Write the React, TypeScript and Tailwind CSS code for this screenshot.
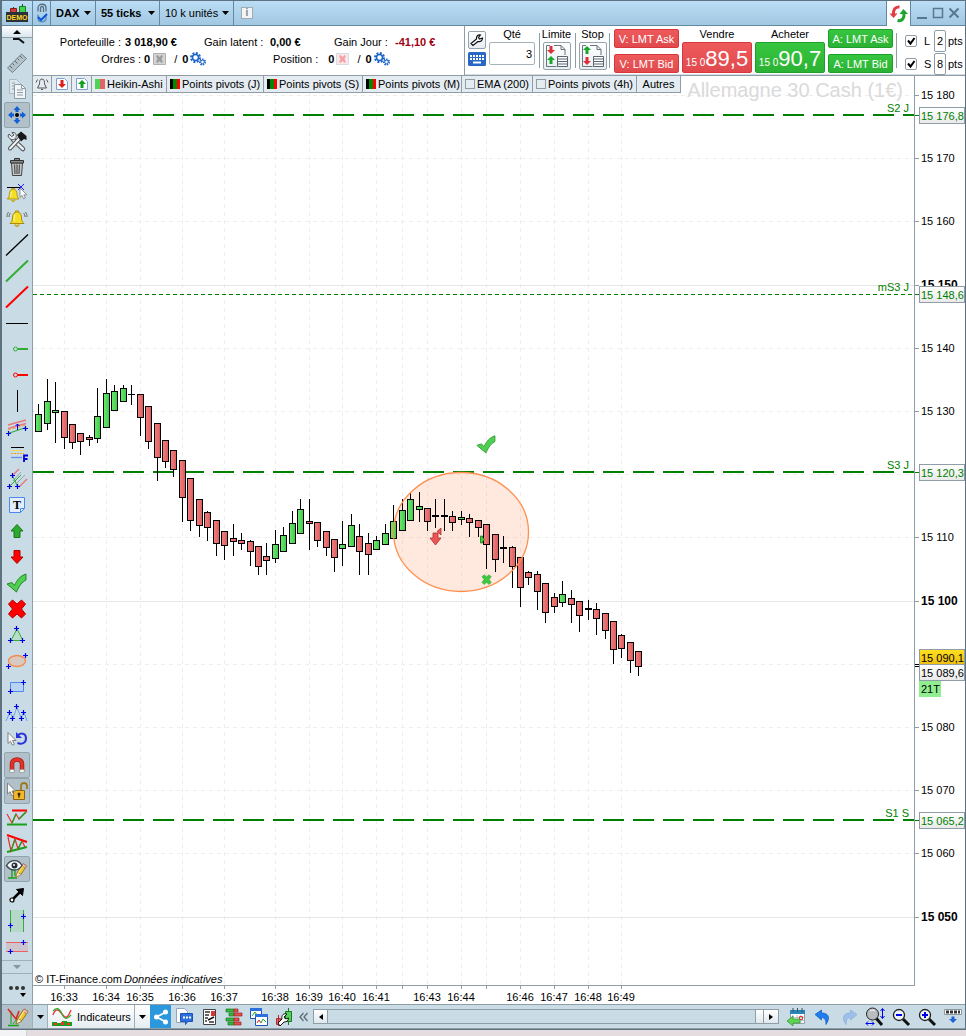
import type { ReactNode } from "react";
import clsx from "clsx";

type Tone = "up" | "down" | "flat";

// left edge, high, body top, body bottom, low, tone
type Candle = [number, number, number, number, number, Tone];

const candles: Candle[] = [
  [35, 404, 414, 432, 432, "up"],
  [44, 379, 401, 424, 430, "up"],
  [52, 382, 410, 413, 443, "up"],
  [61, 411, 411, 438, 449, "down"],
  [69, 424, 424, 443, 449, "down"],
  [77, 433, 433, 442, 455, "down"],
  [86, 435, 437, 440, 446, "down"],
  [94, 388, 416, 439, 443, "up"],
  [103, 379, 393, 428, 428, "up"],
  [111, 385, 391, 411, 411, "up"],
  [120, 385, 388, 402, 402, "up"],
  [128, 385, 394, 395, 405, "flat"],
  [137, 394, 394, 418, 436, "down"],
  [145, 406, 406, 442, 449, "down"],
  [154, 423, 423, 458, 481, "down"],
  [162, 440, 440, 462, 468, "down"],
  [170, 450, 450, 470, 477, "down"],
  [179, 460, 460, 498, 522, "down"],
  [187, 478, 478, 521, 531, "down"],
  [196, 499, 499, 526, 537, "down"],
  [204, 511, 512, 528, 541, "down"],
  [213, 520, 520, 544, 556, "down"],
  [221, 531, 531, 546, 560, "down"],
  [230, 524, 538, 542, 556, "down"],
  [238, 533, 540, 544, 550, "down"],
  [247, 540, 541, 552, 566, "down"],
  [255, 546, 546, 567, 575, "down"],
  [263, 543, 556, 561, 575, "down"],
  [272, 530, 544, 559, 563, "up"],
  [280, 527, 535, 552, 552, "up"],
  [289, 511, 523, 544, 544, "up"],
  [297, 499, 509, 534, 534, "up"],
  [306, 499, 521, 524, 550, "down"],
  [314, 522, 522, 541, 547, "down"],
  [323, 531, 531, 548, 556, "down"],
  [331, 539, 539, 558, 572, "down"],
  [339, 521, 544, 549, 566, "up"],
  [348, 514, 525, 547, 547, "up"],
  [356, 524, 536, 552, 575, "down"],
  [365, 533, 543, 555, 575, "down"],
  [373, 536, 540, 550, 550, "up"],
  [382, 524, 533, 545, 545, "up"],
  [390, 505, 521, 539, 539, "up"],
  [399, 499, 510, 531, 531, "up"],
  [407, 493, 499, 521, 521, "up"],
  [416, 492, 506, 510, 522, "up"],
  [424, 508, 508, 522, 531, "down"],
  [432, 499, 515, 517, 528, "flat"],
  [441, 499, 515, 517, 531, "flat"],
  [449, 511, 516, 523, 531, "down"],
  [458, 511, 517, 520, 525, "up"],
  [466, 514, 518, 523, 537, "down"],
  [475, 520, 520, 528, 537, "down"],
  [483, 524, 524, 545, 569, "down"],
  [492, 534, 534, 560, 572, "down"],
  [500, 536, 547, 549, 563, "flat"],
  [509, 546, 547, 567, 588, "down"],
  [517, 557, 557, 588, 607, "down"],
  [525, 571, 572, 578, 585, "down"],
  [534, 571, 574, 592, 610, "down"],
  [542, 583, 583, 613, 623, "down"],
  [551, 593, 597, 607, 613, "down"],
  [559, 581, 594, 603, 607, "up"],
  [568, 590, 598, 605, 623, "down"],
  [576, 601, 601, 616, 632, "down"],
  [585, 600, 608, 610, 620, "flat"],
  [593, 603, 609, 619, 635, "down"],
  [602, 613, 613, 631, 639, "down"],
  [610, 621, 621, 650, 664, "down"],
  [618, 634, 635, 649, 658, "down"],
  [627, 642, 642, 661, 673, "down"],
  [635, 651, 651, 667, 676, "down"],
];

const times = [
  { x: 31, label: "16:33" },
  { x: 73, label: "16:34" },
  { x: 107, label: "16:35" },
  { x: 149, label: "16:36" },
  { x: 191, label: "16:37" },
  { x: 242, label: "16:38" },
  { x: 276, label: "16:39" },
  { x: 309, label: "16:40" },
  { x: 343, label: "16:41" },
  { x: 369 },
  { x: 394, label: "16:43" },
  { x: 428, label: "16:44" },
  { x: 453 },
  { x: 487, label: "16:46" },
  { x: 521, label: "16:47" },
  { x: 555, label: "16:48" },
  { x: 588, label: "16:49" },
];

const prices = [
  { value: 15180, text: "15 180" },
  { value: 15170, text: "15 170" },
  { value: 15160, text: "15 160" },
  { value: 15150, text: "15 150", major: true },
  { value: 15140, text: "15 140" },
  { value: 15130, text: "15 130" },
  { value: 15120 },
  { value: 15110, text: "15 110" },
  { value: 15100, text: "15 100", major: true },
  { value: 15090 },
  { value: 15080, text: "15 080" },
  { value: 15070, text: "15 070" },
  { value: 15060, text: "15 060" },
  { value: 15050, text: "15 050", major: true },
];

const pivots = [
  { y: 39, name: "S2 J", price: "15 176,8", heavy: true },
  { y: 218, name: "mS3 J", price: "15 148,6", heavy: false },
  { y: 396, name: "S3 J", price: "15 120,3", heavy: true },
  { y: 744, name: "S1 S", price: "15 065,2", heavy: true },
];

const priceY = (value: number) => Math.round((15180 - value) * 6.32 + 19);

function Icon({ children, size = 24 }: { children: ReactNode; size?: number }) {
  return (
    <svg width={size} height={size} viewBox={`0 0 ${size} ${size}`} fill="none" aria-hidden="true" className="shrink-0">
      {children}
    </svg>
  );
}

function Caret() {
  return (
    <svg width="7" height="4" viewBox="0 0 7 4" aria-hidden="true">
      <path d="M0 0h7L3.500 4z" fill="#000" />
    </svg>
  );
}

// small blue cross marking an anchor point
function Anchor({ x, y }: { x: number; y: number }) {
  return <path d={`M${x - 2.5} ${y}h5M${x} ${y - 2.5}v5`} stroke="#0000e6" strokeWidth="1.2" />;
}

function Bell() {
  return (
    <g>
      <path d="M12 5c-3.500 0-4.500 3-4.500 6 0 3-1 4-2.500 5.500h14c-1.500-1.500-2.500-2.500-2.500-5.500 0-3-1-6-4.500-6z" fill="#f4de22" stroke="#a98a10" />
      <path d="M10.500 5.500V4h3v1.500M10 17.500c0 2.500 4 2.500 4 0" stroke="#a98a10" fill="#e8c810" />
      <path d="M10 8c-.7 1.500-.8 4-1 6" stroke="#fffbc0" />
    </g>
  );
}

function Cursor() {
  return <path d="M0 0v11l2.500-2.300 1.800 4 2-1-1.800-3.700H8z" fill="#fff" stroke="#777" strokeWidth=".9" />;
}

function Pencil() {
  return (
    <g>
      <path d="M12 18l2-6 6-9 4 2.500-6 9z" fill="#f5c531" stroke="#8d7020" />
      <path d="M20 3l4 2.500-1.500 2.300-4-2.500z" fill="#f6b8a8" stroke="#a07050" strokeWidth=".7" />
      <path d="M12 18l1.800-5.500L18 15z" fill="#fff2d0" stroke="#8d7020" strokeWidth=".7" />
      <path d="M15 13l5-8" stroke="#fff3a0" />
    </g>
  );
}

const checkPath = "M2 13l5-1.500 2.500 3C12 9 15 5 21 3v6c-4 2-7 6-9.500 12z";
const crossPath = "M3.500 7l4-4 4.500 4L16.500 3l4 4-4 5 4 5-4 4-4.500-4-4.500 4-4-4 4-5z";

type Tool = { name: string; active?: boolean; icon: ReactNode };

const tools: Tool[] = [
  {
    name: "Règle",
    icon: (
      <g>
        <path d="M2.500 17L16.500 3l5 4.500L7.500 21.500z" fill="#b4c2ca" stroke="#71808a" />
        <path d="M5 15l2.500 2.500M7.500 12.500l1.800 1.800M10 10l2.500 2.500M12.500 7.500l1.800 1.800M15 5l2.500 2.500" stroke="#566570" />
      </g>
    ),
  },
  {
    name: "Copier",
    icon: (
      <g>
        <path d="M4.500 2.500h7l4 4v10h-11z" fill="#dce7ec" stroke="#aabac3" />
        <path d="M9.500 7.500h7l4 4v10h-11z" fill="#f3f6f8" stroke="#8d9ba5" />
        <path d="M16.500 7.500v4h4M12 13h6M12 15.500h6M12 18h6M7 6h3M7 9h2M7 12h2" stroke="#8d9ba5" />
      </g>
    ),
  },
  {
    name: "Déplacer",
    active: true,
    icon: (
      <g>
        <path d="M12 3l3.500 4h-2v2h-3V7h-2zM12 21l-3.500-4h2v-2h3v2h2zM3 12l4-3.500v2h2v3H7v2zM21 12l-4 3.500v-2h-2v-3h2v-2z" fill="#1261d6" />
        <circle cx="12" cy="12" r="2" fill="#000" />
      </g>
    ),
  },
  {
    name: "Réglages",
    icon: (
      <g>
        <path d="M18 20L8 10.500" stroke="#4d5459" strokeWidth="4.500" strokeLinecap="round" />
        <path d="M18 20L8 10.500" stroke="#e8ecee" strokeWidth="2.500" strokeLinecap="round" />
        <path d="M3 7l1-2 2.500 2.500L9 6 7 3.500C10 3 12 5 11 8.500 9 12 5 11.500 3 7z" fill="#e8ecee" stroke="#4d5459" />
        <path d="M5 19.500l9-9.500" stroke="#4d5459" strokeWidth="4" strokeLinecap="round" />
        <path d="M5 19.500l9-9.500" stroke="#f5f5f5" strokeWidth="2" strokeLinecap="round" />
        <path d="M12 6l4-3.500 5.500 4.500v4L19 10l-3 2.500z" fill="#181818" />
      </g>
    ),
  },
  {
    name: "Supprimer",
    icon: (
      <g>
        <path d="M6.500 8h11l-1 12.500h-9z" fill="#c9c9c9" stroke="#444" />
        <path d="M9.500 9.500l.5 9.500M12 9.500V19M14.500 9.500L14 19" stroke="#555" strokeWidth="1.300" />
        <path d="M5.500 5.500h13V8h-13zM9.500 5V3.500h5V5" fill="#8b8b8b" stroke="#333" />
      </g>
    ),
  },
  {
    name: "Alerte sur ligne",
    icon: (
      <g>
        <g transform="translate(-2 4) scale(.85)">
          <Bell />
        </g>
        <path d="M2 6.500h14" stroke="#000" />
        <path d="M13 3l6 6M19 3l-6 6" stroke="#1e1ef0" />
        <g transform="translate(15 7) scale(.85)">
          <Cursor />
        </g>
      </g>
    ),
  },
  {
    name: "Alerte",
    icon: (
      <g>
        <Bell />
        <path d="M5.500 6C4.500 7 4 8.500 4 10M3.500 5C2.500 6.500 2 8 2 10M18.500 6c1 1 1.500 2.500 1.500 4M20.500 5c1 1.500 1.500 3 1.500 5" stroke="#666" />
      </g>
    ),
  },
  { name: "Segment noir", icon: <path d="M1 22.500L23 1.500" stroke="#000" strokeWidth="1.300" /> },
  { name: "Segment vert", icon: <path d="M1 22.500L23 1.500" stroke="#35ad35" strokeWidth="2" /> },
  { name: "Segment rouge", icon: <path d="M1 22.500L23 1.500" stroke="#f00" strokeWidth="2" /> },
  { name: "Ligne horizontale", icon: <path d="M1 12.500h22" stroke="#000" /> },
  {
    name: "Demi-droite verte",
    icon: (
      <g stroke="#35ad35">
        <circle cx="10.500" cy="12" r="2" />
        <path d="M12.500 12H23" strokeWidth="2" />
      </g>
    ),
  },
  {
    name: "Demi-droite rouge",
    icon: (
      <g stroke="#f00">
        <circle cx="10.500" cy="12" r="2" />
        <path d="M12.500 12H23" strokeWidth="2" />
      </g>
    ),
  },
  { name: "Ligne verticale", icon: <path d="M12.500 1v22" stroke="#000" /> },
  {
    name: "Canal",
    icon: (
      <g>
        <path d="M3 10l18-5M3 13.500l18-5" stroke="#e87878" strokeWidth="1.300" />
        <path d="M3 15l18-5" stroke="#f0a050" strokeDasharray="3 2" />
        <path d="M3 18.500l18-6" stroke="#35ad35" strokeWidth="1.300" />
        <path d="M12.500 15V9M10.500 11l2-2 2 2" stroke="#0000e6" />
        <Anchor x={3.5} y={18.5} />
        <Anchor x={20.5} y={13.5} />
      </g>
    ),
  },
  {
    name: "Fibonacci",
    icon: (
      <g>
        <path d="M6 6.500h13" stroke="#000" />
        <path d="M6 9.500h13" stroke="#f5dc30" strokeDasharray="3 1" />
        <path d="M6 12.500h13" stroke="#f0a020" strokeDasharray="2 1" />
        <path d="M6 16.500h11" stroke="#5d90f0" strokeWidth="1.300" />
        <path d="M19 21v-6.500h4M19 18h3.500" stroke="#0000d8" strokeWidth="1.800" />
      </g>
    ),
  },
  {
    name: "Fourche",
    icon: (
      <g>
        <path d="M7 9l7-7M14 20l8-8" stroke="#e87878" strokeWidth="1.400" />
        <path d="M8 14l8-9M11 17l9-9" stroke="#99a5ad" />
        <path d="M7.500 8.500l5 11M4 20L16 8" stroke="#35ad35" />
        <Anchor x={7.5} y={8.5} />
        <Anchor x={4.5} y={19.5} />
        <Anchor x={12.5} y={19.5} />
      </g>
    ),
  },
  {
    name: "Texte",
    icon: (
      <g>
        <path d="M4.500 4.500h15v11l-4 4h-11z" fill="#e3eefb" stroke="#4c88ee" />
        <path d="M19.500 15.500h-4v4" stroke="#4c88ee" />
        <text x="12" y="16" textAnchor="middle" fill="#000" className="font-['Liberation_Serif',serif] text-[12px] font-bold">
          T
        </text>
      </g>
    ),
  },
  { name: "Flèche haute", icon: <path d="M12 5.500l6 6.500h-3v6.500H9V12H6z" fill="#2daa2d" stroke="#187818" /> },
  { name: "Flèche basse", icon: <path d="M12 18.500L6 12h3V5.500h6V12h3z" fill="#f00" stroke="#b00000" /> },
  { name: "Coche", icon: <path d={checkPath} fill="#4ed04e" stroke="#24852a" /> },
  { name: "Croix", icon: <path d={crossPath} fill="#f00" stroke="#b40000" /> },
  {
    name: "Triangle",
    icon: (
      <g>
        <path d="M12 6l6 11.500H6z" fill="#b8ddc9" stroke="#35ad35" />
        <Anchor x={11.5} y={5.5} />
        <Anchor x={5.5} y={17.5} />
        <Anchor x={17.5} y={17.5} />
      </g>
    ),
  },
  {
    name: "Ellipse",
    icon: (
      <g>
        <ellipse cx="12" cy="12" rx="8.500" ry="5.500" fill="#d8c9c3" stroke="#f58a4e" strokeWidth="1.300" />
        <Anchor x={3.5} y={17.5} />
        <Anchor x={20.5} y={6.5} />
      </g>
    ),
  },
  {
    name: "Rectangle",
    icon: (
      <g>
        <path d="M5.500 7.500h13v9h-13z" fill="#b9d3f4" stroke="#4c88ee" />
        <Anchor x={5.5} y={16.5} />
        <Anchor x={18.5} y={7.5} />
      </g>
    ),
  },
  {
    name: "Zigzag",
    icon: (
      <g>
        <path d="M1 20l4-9 3 6 4-11 4 11 3-6 3 9" stroke="#6d9ff2" />
        <Anchor x={4.5} y={11.5} />
        <Anchor x={7.5} y={17.5} />
        <Anchor x={11.5} y={5.5} />
        <Anchor x={16.5} y={17.5} />
        <Anchor x={18.5} y={11.5} />
      </g>
    ),
  },
  {
    name: "Annuler le tracé",
    icon: (
      <g>
        <g transform="translate(3 5.500)">
          <Cursor />
        </g>
        <path d="M13 8c4-3 8-1 8 3.500 0 4-4 6.500-8.500 4.500" stroke="#2a35d8" strokeWidth="2" />
        <path d="M11 5v6h6z" fill="#2a35d8" />
      </g>
    ),
  },
  {
    name: "Aimant",
    active: true,
    icon: (
      <g>
        <path d="M7 19v-8c0-6 10-6 10 0v8" stroke="#a11717" strokeWidth="4.500" />
        <path d="M7 19v-8c0-6 10-6 10 0v8" stroke="#e4342a" strokeWidth="3" />
        <path d="M4.800 16.500h4.400v3H4.800zM14.800 16.500h4.400v3h-4.400z" fill="#f7f7f7" stroke="#888" strokeWidth=".6" />
      </g>
    ),
  },
  {
    name: "Verrou",
    active: true,
    icon: (
      <g>
        <path d="M16 11V7c0-4 6-4 6 0v3" stroke="#9a7a20" strokeWidth="1.800" />
        <path d="M8.500 11.500h11v9h-11z" fill="#f3b72a" stroke="#8c6410" />
        <circle cx="14" cy="15" r="1.500" fill="#3b2a00" />
        <path d="M14 15v3.500" stroke="#3b2a00" strokeWidth="1.500" />
        <g transform="translate(2.500 4)">
          <Cursor />
        </g>
      </g>
    ),
  },
  {
    name: "Figures",
    icon: (
      <g>
        <path d="M7 5.500h15" stroke="#f00" strokeWidth="2" />
        <path d="M2 19.500h20" stroke="#18a018" strokeWidth="2" />
        <path d="M2 9l5 9 4-9 3 5 8-8" stroke="#f03030" strokeWidth="1.200" />
        <path d="M7 18l4-9M14 14l7-7" stroke="#18a018" strokeWidth="1.200" />
      </g>
    ),
  },
  {
    name: "Triangles automatiques",
    icon: (
      <g>
        <path d="M2 4l20 7" stroke="#f00" strokeWidth="2" />
        <path d="M2 21l20-5" stroke="#18a018" strokeWidth="2" />
        <path d="M3 6l3 14 4-12 3 10 4-8 3 6" stroke="#e03030" strokeWidth="1.200" />
        <path d="M6 20l4-12M13 18l4-8" stroke="#18a018" strokeWidth="1.200" />
      </g>
    ),
  },
  {
    name: "Afficher les objets",
    active: true,
    icon: (
      <g>
        <path d="M3 21h9M7 13v8M10 12v7" stroke="#18a018" strokeWidth="1.300" />
        <g transform="translate(0 4) scale(.9)">
          <Pencil />
        </g>
        <path d="M1.500 8.500c4-6.500 12-6.500 15.500 0-3.500 6-11.500 6-15.500 0z" fill="#f7fafc" stroke="#3b4a55" strokeWidth="1.400" />
        <circle cx="9.500" cy="8.500" r="3" fill="#26323b" />
        <circle cx="9" cy="8" r="1" fill="#fff" />
      </g>
    ),
  },
  {
    name: "Flèche",
    icon: (
      <g>
        <path d="M7.500 16.500L17 7" stroke="#000" strokeWidth="2.500" />
        <path d="M18.500 5.500l-1 7-6-6z" fill="#000" stroke="#000" />
        <circle cx="7" cy="17" r="2" fill="#fff" stroke="#000" strokeWidth="1.200" />
      </g>
    ),
  },
  {
    name: "Bande verticale",
    icon: (
      <g>
        <path d="M5.500 1h13v22h-13z" fill="#b5d8ca" />
        <path d="M5.500 1v22M18.500 1v22" stroke="#35ad35" />
        <Anchor x={5.5} y={16.5} />
        <Anchor x={18.5} y={7.5} />
      </g>
    ),
  },
  {
    name: "Bande horizontale",
    icon: (
      <g>
        <path d="M1 7.500h22v9H1z" fill="#cfc4ce" />
        <path d="M1 7.500h22M1 16.500h22" stroke="#f06060" />
        <Anchor x={5.5} y={16.5} />
        <Anchor x={18.5} y={7.5} />
      </g>
    ),
  },
];

function Toolbar() {
  return (
    <div className="flex w-[31px] shrink-0 flex-col items-center border-r border-[#8f9ea6] bg-[#c9dbe5]">
      <button aria-label="Défiler vers le haut" className="flex h-3 w-full items-center justify-center border-b border-[#8f9ea6] bg-linear-to-b from-white to-[#d9e6ee]">
        <svg width="8" height="4" viewBox="0 0 8 4" aria-hidden="true">
          <path d="M0 4h8L4 0z" fill="#000" />
        </svg>
      </button>
      <button aria-label="Pointeur" className="flex h-3 w-full items-start justify-center overflow-hidden">
        <svg width="24" height="12" viewBox="0 0 24 12" aria-hidden="true">
          <path d="M8 1h6l5 4" stroke="#111" strokeWidth="2" fill="none" />
        </svg>
      </button>
      {tools.map((tool) => (
        <button
          key={tool.name}
          aria-label={tool.name}
          className={clsx(
            "flex size-[26px] shrink-0 items-center justify-center rounded-xs border",
            tool.active ? "border-[#93a4ae] bg-[#b1c0c9]" : "border-transparent"
          )}
        >
          <Icon>{tool.icon}</Icon>
        </button>
      ))}
      <button aria-label="Défiler vers le bas" className="flex h-3.5 w-full items-center justify-center border-y border-[#9fb0ba]">
        <svg width="8" height="4" viewBox="0 0 8 4" aria-hidden="true">
          <path d="M0 0h8L4 4z" fill="#8796a0" />
        </svg>
      </button>
      <button aria-label="Plus d'outils" className="flex h-[30px] w-full items-center justify-center">
        <Icon>
          <circle cx="6" cy="11" r="2" fill="#333" />
          <circle cx="12" cy="11" r="2" fill="#333" />
          <circle cx="18" cy="11" r="2" fill="#333" />
          <path d="M15 16h6l-3 4z" fill="#000" />
        </Icon>
      </button>
    </div>
  );
}

function TitleSelect({ label, value, className }: { label: string; value: string; className: string }) {
  return (
    <div className={clsx("relative flex items-center border-r border-[#6189a3]", className)}>
      <select aria-label={label} className="h-full w-full appearance-none bg-transparent pl-[5px] outline-none">
        <option>{value}</option>
      </select>
      <span className="pointer-events-none absolute right-1">
        <Caret />
      </span>
    </div>
  );
}

function TitleBar() {
  return (
    <div className="flex h-[25px] border-b border-[#6189a3] bg-linear-to-b from-[#bbddf6] to-[#a2c7e1] font-bold">
      <div className="flex w-[31px] items-center justify-center border-r border-[#6189a3]">
        <svg width="22" height="20" viewBox="0 0 22 20" aria-label="DEMO">
          <path d="M7.500 4v6M16.500 1v9" stroke="#333" />
          <path d="M4.500 5.500h6v4h-6z" fill="#d23a3a" stroke="#8a1a1a" />
          <path d="M13.500 3.500h6v6h-6z" fill="#3fd34a" stroke="#197c22" />
          <path d="M0 9h22v10H0z" fill="#2b3138" />
          <text x="11" y="17" textAnchor="middle" fill="#ffd91f" className="text-[7px] font-bold">
            DEMO
          </text>
        </svg>
      </div>
      <button aria-label="Lier" className="flex w-[18px] items-center justify-center border-r border-[#6189a3]">
        <svg width="12" height="20" viewBox="0 0 12 20" fill="none" aria-hidden="true">
          <path d="M2 8.500V5c0-5 8-5 8 0v3.500M4.500 9V5c0-2 3-2 3 0v4" stroke="#566f80" strokeWidth="1.300" />
          <path d="M2 11.500V15c0 5 8 5 8 0v-3.500" stroke="#5b92c4" strokeWidth="1.500" />
          <path d="M2 14l3 3 6-6" stroke="#0e55d2" strokeWidth="2" />
        </svg>
      </button>
      <TitleSelect label="Valeur" value="DAX" className="w-[45px]" />
      <TitleSelect label="Unité de temps" value="55 ticks" className="w-16" />
      <div className="flex font-normal">
        <TitleSelect label="Historique" value="10 k unités" className="w-[74px]" />
      </div>
      <div className="flex flex-1 items-center pl-[7px]">
        <button aria-label="Information" className="size-3 border border-[#a0acb4] bg-[#f2f4f5] text-center text-[10px] leading-[10px] text-[#7d888f]">
          i
        </button>
      </div>
      <button aria-label="Actualiser" className="-mb-px flex w-[25px] items-center justify-center border-x border-[#6189a3] bg-white">
        <svg width="20" height="18" viewBox="0 0 20 18" fill="none" aria-hidden="true">
          <path d="M10.500 2C6 1.500 4 5 4.500 9.500" stroke="#e43c40" strokeWidth="3" />
          <path d="M.5 8.500h8L4.500 13z" fill="#e43c40" />
          <path d="M8.500 15.500c5 1 7-2.500 6.500-7.500" stroke="#1fa52d" strokeWidth="3" />
          <path d="M10.500 9h8.500l-4.500-5z" fill="#1fa52d" />
        </svg>
      </button>
      <div className="flex w-[54px] items-center justify-center gap-1">
        {["M1 11h10", "M1.500 1.500h9v9h-9z", "M1.500 1.500l9 9M10.500 1.500l-9 9"].map((d, i) => (
          <button key={d} aria-label={["Réduire", "Agrandir", "Fermer"][i]}>
            <svg width="12" height="12" viewBox="0 0 12 12" fill="none" aria-hidden="true">
              <path d={d} stroke="#577891" strokeWidth={i === 1 ? 1.5 : 2} />
            </svg>
          </button>
        ))}
      </div>
    </div>
  );
}

function Gears() {
  return (
    <svg width="16" height="14" viewBox="0 0 16 14" fill="none" aria-hidden="true" className="ml-0.5">
      <circle cx="5.500" cy="5.500" r="4.500" stroke="#1a63c8" strokeWidth="2" strokeDasharray="2 1.500" />
      <circle cx="5.500" cy="5.500" r="3" stroke="#1a63c8" strokeWidth="1.500" />
      <circle cx="12.500" cy="10" r="2.800" stroke="#1a63c8" strokeWidth="1.500" strokeDasharray="1.500 1" />
      <circle cx="12.500" cy="10" r="1.800" stroke="#1a63c8" />
    </svg>
  );
}

function CancelBadge({ red }: { red?: boolean }) {
  return (
    <svg width="13" height="12" viewBox="0 0 13 12" aria-hidden="true">
      <path d="M.5.500h12v11H.5z" fill={red ? "#fbe9ea" : "#d3d3d3"} stroke={red ? "#d5dde2" : "#b0b0b0"} />
      <path d="M3 3l1.500-1L6.500 4l2-2L10 3 8.500 6 10 9l-1.500 1-2-2-2 2L3 9l1.500-3z" fill={red ? "#f3a3a8" : "#9c9c9c"} />
    </svg>
  );
}

function Account() {
  return (
    <div className="flex flex-1 flex-col justify-center gap-px border-r border-[#8f9ea6] pb-px">
      <div className="flex h-4 items-center whitespace-nowrap">
        <span className="w-[88px] text-right">Portefeuille :</span>
        <strong className="ml-1 w-[79px]">3 018,90 €</strong>
        <span className="w-[58px] text-right">Gain latent :</span>
        <strong className="ml-2 w-16">0,00 €</strong>
        <span className="w-[53px] text-right">Gain Jour :</span>
        <strong className="ml-2 text-[#a00010]">-41,10 €</strong>
      </div>
      <div className="flex h-4 items-center whitespace-nowrap">
        <span className="w-[108px] text-right">Ordres :</span>
        <strong className="mr-[3px] ml-[3px]">0</strong>
        <CancelBadge />
        <span className="ml-2">/</span>
        <strong className="ml-[5px]">0</strong>
        <Gears />
        <span className="w-28 text-right">Position :</span>
        <strong className="mr-0.5 ml-2.5">0</strong>
        <CancelBadge red />
        <span className="ml-2">/</span>
        <strong className="ml-[5px]">0</strong>
        <Gears />
      </div>
    </div>
  );
}

function Separator() {
  return <div className="mt-[7px] h-[35px] w-px bg-[#8f9ea6]" />;
}

function OrderType({ label, down }: { label: string; down?: boolean }) {
  return (
    <div className="flex w-[29px] flex-col items-center">
      <span className="h-4 leading-4">{label}</span>
      <button aria-label={label} className="flex size-7 items-center justify-center rounded-xs border border-[#96a3ab] bg-linear-to-b from-white to-[#e8edf0]">
        <svg width="24" height="24" viewBox="0 0 24 24" fill="none" aria-hidden="true">
          <path d="M9 1.500h7l4 4V11M16 1.500v4h4M1.500 5V1.500H5M1.500 5v17.500h10" stroke="#68757e" />
          <path d="M12.500 12.500h10v10h-10z" fill="#fff" stroke="#586570" />
          <path d="M12 15h11M12 17.500h11M12 20h11" stroke="#586570" />
          {down ? (
            <g>
              <path d="M6 2l4 4H7.500v4h-3V6H2z" fill="#17a72a" />
              <path d="M6 21l-4-4h2.500v-4h3v4H10z" fill="#dc3038" />
            </g>
          ) : (
            <g>
              <path d="M6 10L2 6h2.500V2h3v4H10z" fill="#dc3038" />
              <path d="M6 12l4 4H7.500v4h-3v-4H2z" fill="#17a72a" />
            </g>
          )}
        </svg>
      </button>
    </div>
  );
}

const sellStyle = "border-[#d9363b] bg-linear-to-b from-[#ee5a5c] to-[#e04a4e]";
const buyStyle = "border-[#1e9f2b] bg-linear-to-b from-[#37c640] to-[#2bb234]";

function LimitButtons({ side, buy }: { side: string; buy?: boolean }) {
  return (
    <div className="mt-[3px] flex w-[65px] flex-col gap-1.5">
      {["Ask", "Bid"].map((kind) => (
        <button key={kind} className={clsx("h-[19px] rounded-xs border text-center text-white", buy ? buyStyle : sellStyle)}>
          {side}: LMT {kind}
        </button>
      ))}
    </div>
  );
}

function TradeButton({ label, price, buy }: { label: string; price: string; buy?: boolean }) {
  return (
    <div className="flex w-[70px] flex-col">
      <span className="h-4 text-center leading-4">{label}</span>
      <button
        aria-label={label}
        className={clsx("flex h-[31px] items-baseline justify-center rounded-xs border leading-[31px] text-white", buy ? buyStyle : sellStyle)}
      >
        <span className="text-[10px]">15 0</span>
        <span className="text-[22px]">{price}</span>
      </button>
    </div>
  );
}

function StopRow({ letter, points }: { letter: string; points: string }) {
  return (
    <div className="flex h-[23px] items-center">
      <label className="flex items-center gap-[7px]">
        <span className="relative flex">
          <input type="checkbox" defaultChecked className="peer size-3 appearance-none rounded-xs border border-[#8f9ea6] bg-white" />
          <svg width="12" height="12" viewBox="0 0 12 12" fill="none" aria-hidden="true" className="pointer-events-none absolute hidden peer-checked:block">
            <path d="M3 5.500l2.500 3L9.500 3" stroke="#000" strokeWidth="2" />
          </svg>
        </span>
        <span className="w-1.5">{letter}</span>
      </label>
      <input aria-label={`Points ${letter}`} defaultValue={points} className="ml-1 h-[22px] w-3 rounded-xs border border-[#8f9ea6] bg-white p-0 text-center" />
      <span className="ml-0.5">pts</span>
    </div>
  );
}

function OrderPanel() {
  return (
    <div className="flex w-[500px] shrink-0 gap-[3px] border-b border-[#d5dde2] pl-[3px]">
      <div className="mt-1 flex w-[18px] flex-col gap-[3px] pt-px">
        <button aria-label="Configurer" className="flex size-[18px] items-center justify-center rounded-xs border border-[#96a3ab] bg-linear-to-b from-white to-[#e8edf0]">
          <svg width="14" height="14" viewBox="0 0 14 14" fill="none" aria-hidden="true">
            <path d="M1 10.500L6.500 6C6 3 8 1.500 10.500 2L8.500 4.500l1 1.500 3-1c0 3-2 4-4.500 3.500L3 12.500z" stroke="#111" strokeWidth="1.200" fill="#fff" />
          </svg>
        </button>
        <button aria-label="Clavier">
          <svg width="18" height="14" viewBox="0 0 18 14" aria-hidden="true">
            <rect width="18" height="14" rx="1.500" fill="#2767c6" />
            <path d="M2 4h14M2 7h14" stroke="#fff" strokeWidth="2" strokeDasharray="2 1" />
            <path d="M5 10.500h8" stroke="#fff" strokeWidth="2" />
          </svg>
        </button>
      </div>
      <label className="flex w-[46px] flex-col items-center">
        <span className="h-4 leading-4">Qté</span>
        <input defaultValue="3" className="h-[23px] w-[46px] rounded-xs border border-[#a5b2ba] bg-white pr-0.5 text-right" />
      </label>
      <div className="flex gap-0.5 px-px">
        <Separator />
        <OrderType label="Limite" />
        <div />
        <Separator />
        <OrderType label="Stop" down />
        <Separator />
      </div>
      <LimitButtons side="V" />
      <TradeButton label="Vendre" price="89,5" />
      <TradeButton label="Acheter" price="90,7" buy />
      <LimitButtons side="A" buy />
      <div className="flex gap-2">
        <Separator />
        <div className="mt-[3px]">
          <StopRow letter="L" points="2" />
          <StopRow letter="S" points="8" />
        </div>
      </div>
    </div>
  );
}

type Tab = { label: string; width: string; swatch: string[] };

const tabs: Tab[] = [
  { label: "Heikin-Ashi", width: "w-[75px]", swatch: ["#4fd455", "#e06467"] },
  { label: "Points pivots (J)", width: "w-[97px]", swatch: ["#000", "#080", "#f00"] },
  { label: "Points pivots (S)", width: "w-[99px]", swatch: ["#000", "#080", "#f00"] },
  { label: "Points pivots (M)", width: "w-[99px]", swatch: ["#000", "#080", "#f00"] },
  { label: "EMA (200)", width: "w-[71px]", swatch: [] },
  { label: "Points pivots (4h)", width: "w-[104px]", swatch: [] },
];

function TabBar() {
  return (
    <div className="absolute top-0 left-0 flex h-[17px] border-b border-[#8f9ea6] bg-[#e4ecf2] whitespace-nowrap">
      <button aria-label="Alertes" className="flex w-[19px] items-center justify-center border-r border-[#8f9ea6]">
        <svg width="14" height="14" viewBox="0 0 14 14" fill="none" aria-hidden="true">
          <path d="M7 2C4.500 2 4.500 5 4.500 7L2.500 11h9l-2-4c0-2 0-5-2.500-5zM6 12.500h2M2.500 2.500L1 5.500M11.500 2.500L13 5.500" stroke="#555" />
        </svg>
      </button>
      {[
        { name: "Vendre", d: "M7 11L3 7h2.500V3h3v4H11z", fill: "#dc2020" },
        { name: "Acheter", d: "M7 3l4 4H8.500v4h-3V7H3z", fill: "#10a020" },
      ].map((item) => (
        <button key={item.name} aria-label={item.name} className="flex w-5 items-center justify-center border-r border-[#8f9ea6]">
          <svg width="14" height="14" viewBox="0 0 14 14" aria-hidden="true">
            <path d="M1.500 1.500h8l3 3v8h-11z" fill="#fff" stroke="#7fa0d0" />
            <path d={item.d} fill={item.fill} />
          </svg>
        </button>
      ))}
      {tabs.map((tab) => (
        <button key={tab.label} className={clsx("flex items-center gap-0.5 border-r border-[#8f9ea6] pl-[3px]", tab.width)}>
          {tab.swatch.length ? (
            <span className="flex size-2.5">
              {tab.swatch.map((color) => (
                <span key={color} className="flex-1" style={{ background: color }} />
              ))}
            </span>
          ) : (
            <span className="size-2.5 border border-[#8f9ea6]" />
          )}
          {tab.label}
        </button>
      ))}
      <button className="w-11 border-r border-[#8f9ea6] text-center">Autres</button>
    </div>
  );
}

function CandleShape({ candle }: { candle: Candle }) {
  const [x, high, top, bottom, low, tone] = candle;
  return (
    <g>
      <rect x={x + 3} y={high} width="1" height={low - high} fill="#000" />
      {tone === "flat" ? (
        <rect x={x} y={top} width="7" height={bottom - top} fill="#000" />
      ) : (
        <rect x={x + 0.5} y={top + 0.5} width="6" height={bottom - top - 1} fill={`url(#${tone})`} stroke="#000" />
      )}
    </g>
  );
}

function Plot() {
  return (
    <div className="relative min-w-0 flex-1 border-r border-[#8f9ea6]">
      <svg width="100%" height="909" className="block" role="img" aria-label="DAX 55 ticks">
        <defs>
          <linearGradient id="up">
            <stop offset="0" stopColor="#6eea6e" />
            <stop offset="1" stopColor="#3fc94a" />
          </linearGradient>
          <linearGradient id="down">
            <stop offset="0" stopColor="#f58080" />
            <stop offset="1" stopColor="#d95c5e" />
          </linearGradient>
        </defs>
        {times.map((time) => (
          <line key={time.x} x1={time.x + 0.5} x2={time.x + 0.5} y1="0" y2="100%" stroke="#eee" strokeDasharray="4 4" />
        ))}
        {prices.map((price) => (
          <line
            key={price.value}
            x1="0"
            x2="100%"
            y1={priceY(price.value) + 0.5}
            y2={priceY(price.value) + 0.5}
            stroke={price.major ? "#e6e6e6" : "#eee"}
            strokeDasharray={price.major ? undefined : "4 4"}
          />
        ))}
        <text x="100%" dx="-11" y="21" textAnchor="end" fill="#dadada" className="text-[20px]">
          Allemagne 30 Cash (1€)
        </text>
        {pivots.map((pivot) => (
          <g key={pivot.name}>
            <line
              x1="0"
              x2="100%"
              y1={pivot.heavy ? pivot.y : pivot.y + 0.5}
              y2={pivot.heavy ? pivot.y : pivot.y + 0.5}
              stroke="#008000"
              strokeWidth={pivot.heavy ? 2 : 1}
              strokeDasharray={pivot.heavy ? "21 9" : "4 3"}
            />
            <text x="100%" dx="-5" y={pivot.y - 3} textAnchor="end" fill="#008000">
              {pivot.name}
            </text>
          </g>
        ))}
        <g transform="translate(-33 -76)">
          <ellipse cx="461" cy="532" rx="67.500" ry="59.500" fill="#ff7f3f" fillOpacity=".17" />
          {candles.map((candle) => (
            <CandleShape key={candle[0]} candle={candle} />
          ))}
          <ellipse cx="461" cy="532" rx="67.500" ry="59.500" fill="none" stroke="#ff9050" strokeWidth="1.300" />
          <g transform="translate(475 433) scale(.95)">
            <path d={checkPath} fill="#4ed04e" stroke="#3a9c40" />
          </g>
          <g transform="translate(480 573) scale(.55)">
            <path d={crossPath} fill="#3fc83f" stroke="#2aa32a" />
          </g>
          <path d="M433 533h5v5h3l-5.500 7-5.500-7h3zM441 528v7l-4-3.500z" fill="#ee5557" stroke="#a83030" strokeWidth=".8" />
          <path d="M480.500 536v7h2v-1.500l2-2-2-2V536z" fill="#3fd03f" stroke="#157a15" strokeWidth=".8" />
        </g>
        <text x="2" y="907" fill="#000">
          © IT-Finance.com
        </text>
        <text x="91" y="907" fill="#000" className="italic">
          Données indicatives
        </text>
      </svg>
      <TabBar />
    </div>
  );
}

function PriceTag({ y, text, tone }: { y: number; text: string; tone: "gold" | "plain" | "pivot" }) {
  return (
    <g>
      <rect x="4.500" y={y + 0.5} width="45" height="16" fill={tone === "gold" ? "url(#gold)" : "url(#paper)"} stroke="#8f9ea6" />
      <text x="6" y={y + 13} fill={tone === "pivot" ? "#008000" : "#000"}>
        {text}
      </text>
    </g>
  );
}

function PriceAxis() {
  return (
    <svg width="50" height="909" className="block shrink-0" role="img" aria-label="Prix">
      <defs>
        <linearGradient id="gold" x2="0" y2="1">
          <stop offset="0" stopColor="#ffe021" />
          <stop offset="1" stopColor="#eebb10" />
        </linearGradient>
        <linearGradient id="paper" x2="0" y2="1">
          <stop offset="0" stopColor="#fff" />
          <stop offset="1" stopColor="#e9e9e9" />
        </linearGradient>
      </defs>
      {prices.map(
        (price) =>
          price.text && (
            <g key={price.value}>
              <path d={`M0 ${priceY(price.value) + 0.5}h4`} stroke="#8f9ea6" />
              <text x="6" y={priceY(price.value) + 4} className={price.major ? "text-[12px] font-bold" : ""}>
                {price.text}
              </text>
            </g>
          )
      )}
      {pivots.map((pivot) => (
        <g key={pivot.name}>
          <path d={`M0 ${pivot.y + 0.5}h4`} stroke="#008000" />
          <PriceTag y={pivot.y - 8} text={pivot.price} tone="pivot" />
        </g>
      ))}
      <path d="M0 588.500h4M0 590.500h4" stroke="#000" />
      <PriceTag y={573} text="15 090,1" tone="gold" />
      <PriceTag y={588} text="15 089,6" tone="plain" />
      <rect x="4" y="605" width="22" height="16" fill="#90ee90" />
      <text x="6" y="617">
        21T
      </text>
    </svg>
  );
}

function TimeAxis() {
  return (
    <div className="flex h-[19px]">
      <div className="flex-1 border-t border-[#8f9ea6]">
        <svg width="100%" height="18" className="block" role="img" aria-label="Heure">
          {times.map((time) => (
            <g key={time.x}>
              <path d={`M${time.x + 0.5} 0v3`} stroke="#8f9ea6" />
              {time.label && (
                <text x={time.x} y="15" textAnchor="middle">
                  {time.label}
                </text>
              )}
            </g>
          ))}
        </svg>
      </div>
      <div className="w-[50px]" />
    </div>
  );
}

const chartTools = [
  {
    name: "Commentaires",
    icon: (
      <g>
        <path d="M2.500 1.500h8l3 3v11h-11z" fill="#fff" stroke="#8fa5c0" />
        <path d="M6.500 6.500h12v8h-5l-2 3v-3h-5z" fill="#2d6fdc" stroke="#1b54b5" />
        <path d="M9 10.500h8" stroke="#fff" strokeWidth="2" strokeDasharray="2 1" />
      </g>
    ),
  },
  {
    name: "Rapport",
    icon: (
      <g>
        <path d="M4.500 2.500h12v15h-12z" fill="#fff" stroke="#444" />
        <path d="M6 5h5M6 8h4M6 11h3M6 14h2M10 15h5" stroke="#333" strokeWidth="1.500" />
        <path d="M12 4h4v5h-4z" fill="#d33" />
        <path d="M9 13l6-3" stroke="#111" strokeWidth="1.500" />
      </g>
    ),
  },
  {
    name: "Carnet",
    icon: (
      <g>
        <path d="M2 2h8v3H2zM5 6h5v3H5zM2 11h8v3H2zM4 15h6v3H4z" fill="#35b53f" stroke="#177a22" strokeWidth=".7" />
        <path d="M10 2h4v3h-4zM10 6h8v3h-8zM10 11h5v3h-5zM10 15h7v3h-7z" fill="#e05050" stroke="#a02020" strokeWidth=".7" />
      </g>
    ),
  },
  {
    name: "Fenêtres",
    icon: (
      <g>
        <path d="M1.500 1.500h11v10h-11z" fill="#fff" stroke="#1d56b8" />
        <path d="M1 2.500h12" stroke="#2d6fdc" strokeWidth="3" />
        <path d="M3 9l3-4 2 3" stroke="#2a2" />
        <path d="M6.500 7.500h12v11h-12z" fill="#fff" stroke="#1d56b8" />
        <path d="M6 8.500h13" stroke="#2d6fdc" strokeWidth="3" />
        <path d="M8 16l2-3 2 3" stroke="#c22" />
        <path d="M12 16l2-4 3 3" stroke="#2a2" />
      </g>
    ),
  },
  {
    name: "Configuration",
    icon: (
      <g>
        <path d="M14.500 1v17" stroke="#177a22" />
        <path d="M11.500 4.500h6v10h-6z" fill="#4fd455" stroke="#177a22" />
        <path d="M4.500 8v11M2.500 11.500h4v6h-4z" stroke="#b52b2b" fill="#e06467" />
        <path d="M4 16l4-4c-1-4 2-6 5-5l-3 3 1.500 2 3-1c0 3-2 4-4.500 4l-4 4z" fill="#fff" stroke="#111" />
      </g>
    ),
  },
];

function Lens({ children }: { children?: ReactNode }) {
  return (
    <g>
      <path d="M12 12l6 6" stroke="#111" strokeWidth="3" />
      <circle cx="8" cy="8" r="5.500" fill="#eef3f6" stroke="#222" strokeWidth="1.300" />
      {children}
    </g>
  );
}

const viewTools = [
  {
    name: "Aller à la date",
    icon: (
      <g>
        <path d="M3.500 4.500h14v12h-14z" fill="#fff" stroke="#96a3ab" />
        <path d="M3 3h15v4H3z" fill="#2a86b8" />
        <path d="M6 1v4M10.500 1v4M15 1v4" stroke="#36535f" />
        <path d="M6 8v8M10 8v8M14 8v8M4 10.500h13M4 13.500h13" stroke="#b8c4ca" />
        <path d="M12.500 9.500h3v3h-3z" stroke="#e33" />
        <path d="M0 14l6-5v3h7v4H6v3z" fill="#5fd455" stroke="#2d9430" strokeWidth=".7" />
      </g>
    ),
  },
  {
    name: "Annuler",
    icon: <path d="M2 7.500L8.500 3v3C15 6 18 10 13 17.500c0-5-1.500-7-4.500-7V13z" fill="#1e7df0" stroke="#1358b8" strokeWidth=".7" />,
  },
  {
    name: "Rétablir",
    icon: <path d="M18 7.500L11.500 3v3C5 6 2 10 7 17.500c0-5 1.500-7 4.500-7V13z" fill="#9dbfe8" stroke="#86abd8" strokeWidth=".7" />,
  },
  {
    name: "Ajuster",
    icon: (
      <g>
        <path d="M11 11l6 7" stroke="#111" strokeWidth="3" />
        <circle cx="7.500" cy="7" r="6" fill="#b9bdc0" stroke="#222" />
        <path d="M5 4c2-1.500 4-1 5 0" stroke="#fff" />
        <path d="M17.500 2v9M15.500 4l2-2.500 2 2.500M15.500 9l2 2.500 2-2.500M1 16.500h8M3 14.500l-2 2 2 2M7 14.500l2 2-2 2" stroke="#0000e6" />
      </g>
    ),
  },
  {
    name: "Zoom arrière",
    icon: (
      <Lens>
        <path d="M5 8h6" stroke="#0000e6" strokeWidth="2" />
      </Lens>
    ),
  },
  {
    name: "Zoom avant",
    icon: (
      <Lens>
        <path d="M5 8h6M8 5v6" stroke="#0000e6" strokeWidth="2" />
      </Lens>
    ),
  },
  {
    name: "Masquer la barre",
    icon: (
      <g>
        <path d="M1.500 2.500h17v5h-17z" fill="#fff" stroke="#8b979f" />
        <path d="M3 5h14" stroke="#333" strokeWidth="3" strokeDasharray="3 1" />
        <path d="M8.500 9.500h3V12H14l-4 4-4-4h2.500z" fill="#1d62d0" />
      </g>
    ),
  },
];

function BottomBar() {
  return (
    <div className="flex h-[25px] border-y border-[#8f9ea6] bg-[#c9dbe5]">
      <button aria-label="Dessiner" className="flex w-[31px] items-center justify-center border-r border-[#9fb0ba] bg-[#b1c0c9]">
        <Icon>
          <path d="M6 6v13M8 19L18 7" stroke="#18a018" />
          <path d="M3 4l8 10 3-8" stroke="#e02020" strokeWidth="1.500" />
          <path d="M3 20.500h11" stroke="#18a018" strokeWidth="1.500" />
          <g transform="translate(-1 1)">
            <Pencil />
          </g>
        </Icon>
      </button>
      <button aria-label="Options de dessin" className="flex w-[15px] items-center justify-center border-r border-[#9fb0ba]">
        <Caret />
      </button>
      <button className="flex w-[87px] items-center gap-[5px] border-r border-[#9fb0ba] bg-linear-to-b from-white to-[#e6edf1] pl-1">
        <Icon size={20}>
          <path d="M1 8c3-8 6-5 9-1s5 6 9-4" stroke="#e33" strokeWidth="1.300" />
          <path d="M1 4c3-3 6-4 9 3s6 4 9 1" stroke="#35ad35" strokeWidth="1.300" />
          <path d="M0 19v-4h5v1h5v-2h5v1h5v4z" fill="#18a018" />
          <path d="M2 18v-2h3v2zM9 18v-3h3v3zM15 18v-2h3v2z" fill="#e33" />
        </Icon>
        Indicateurs
      </button>
      <button aria-label="Options des indicateurs" className="flex w-[15px] items-center justify-center bg-linear-to-b from-white to-[#e6edf1]">
        <Caret />
      </button>
      <button aria-label="Partager" className="flex w-[21px] items-center justify-center bg-[#2b97dc]">
        <svg width="16" height="16" viewBox="0 0 16 16" aria-hidden="true">
          <path d="M13 3L3.500 8l9.500 5" stroke="#fff" strokeWidth="1.800" fill="none" />
          <circle cx="12.500" cy="3" r="2.500" fill="#fff" />
          <circle cx="3.500" cy="8" r="2.500" fill="#fff" />
          <circle cx="12.500" cy="13" r="2.500" fill="#fff" />
        </svg>
      </button>
      <div className="flex items-center gap-[5px] pl-[3px]">
        {chartTools.map((tool) => (
          <button key={tool.name} aria-label={tool.name}>
            <Icon size={20}>{tool.icon}</Icon>
          </button>
        ))}
        <button aria-label="Replier">
          <svg width="10" height="10" viewBox="0 0 10 10" fill="none" aria-hidden="true">
            <path d="M4.500 1l-3.500 4 3.500 4M8.500 1L5 5l3.500 4" stroke="#5c6b75" strokeWidth="1.300" />
          </svg>
        </button>
      </div>
      <div className="mx-1 my-1 flex min-w-0 flex-1 border border-[#8f9ea6]">
        <button aria-label="Défiler à gauche" className="flex w-3.5 items-center justify-center border-r border-[#8f9ea6] bg-linear-to-b from-white to-[#dfe8ed]">
          <svg width="4" height="6" viewBox="0 0 4 6" aria-hidden="true">
            <path d="M4 0v6L0 3z" />
          </svg>
        </button>
        <div className="flex-1" />
        <div className="w-2 border-l border-[#8f9ea6] bg-linear-to-b from-white to-[#dfe8ed]" />
        <button aria-label="Défiler à droite" className="flex w-[15px] items-center justify-center border-l border-[#8f9ea6] bg-linear-to-b from-white to-[#dfe8ed]">
          <svg width="4" height="6" viewBox="0 0 4 6" aria-hidden="true">
            <path d="M0 0v6l4-3z" />
          </svg>
        </button>
      </div>
      <div className="flex items-center gap-1.5 pr-0.5 pl-1">
        {viewTools.map((tool) => (
          <button key={tool.name} aria-label={tool.name}>
            <Icon size={20}>{tool.icon}</Icon>
          </button>
        ))}
      </div>
    </div>
  );
}

export default function App() {
  return (
    <div className="flex min-h-screen flex-col bg-[#e5dce0] font-['Liberation_Sans',Arial,sans-serif] text-[11px] leading-4 text-black">
      <div className="border-t border-r border-b border-l-2 border-[#5d717e] bg-white">
        <TitleBar />
        <div className="flex">
          <Toolbar />
          <div className="flex min-w-0 flex-1 flex-col">
            <div className="flex h-[50px] border-b border-[#8f9ea6]">
              <Account />
              <OrderPanel />
            </div>
            <div className="flex">
              <Plot />
              <PriceAxis />
            </div>
            <TimeAxis />
          </div>
        </div>
        <BottomBar />
      </div>
      <div className="flex flex-1">
        <div className="w-[27px] border-r border-[#d0d0d4] bg-[#f3f3f5]" />
      </div>
    </div>
  );
}
